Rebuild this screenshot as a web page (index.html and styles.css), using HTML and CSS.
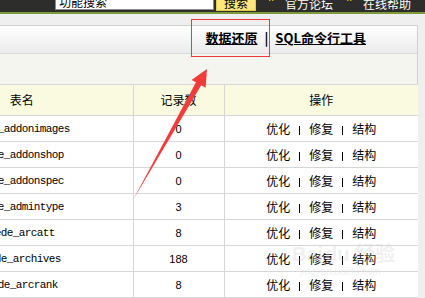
FILE: index.html
```html
<!DOCTYPE html>
<html lang="zh-CN">
<head>
<meta charset="utf-8">
<title>数据库管理</title>
<link rel="stylesheet" href="styles.css">
</head>
<body>
<div class="topbar">
  <div class="search">功能搜索</div>
  <div class="btn">搜索</div>
  <a class="toplink first"><svg class="ticon" width="6" height="6" viewBox="0 0 6 6"><rect x="0" y="1" width="1.5" height="4" fill="#d9a21f"/><rect x="3" y="0" width="1.5" height="5" fill="#d9a21f"/></svg><span>官方论坛</span></a>
  <a class="toplink second"><svg class="ticon" width="6" height="6" viewBox="0 0 6 6"><rect x="0" y="1" width="1.5" height="4" fill="#d9a21f"/><rect x="3" y="0" width="1.5" height="5" fill="#d9a21f"/></svg><span>在线帮助</span></a>
</div>
<div class="panel">
  <div class="toolbar">
    <a class="tlink">数据还原</a><span class="tsep">|</span><a class="tlink">SQL命令行工具</a>
  </div>
  <div class="subbar"></div>
  <table class="dbtable">
    <colgroup><col class="c1"><col class="c2"><col class="c3"></colgroup>
    <thead>
      <tr><th>表名</th><th>记录数</th><th>操作</th></tr>
    </thead>
    <tbody>
      <tr><td class="name">dede_addonimages</td><td class="num">0</td><td class="ops"><a>优化</a><span class="osep"></span><a>修复</a><span class="osep"></span><a>结构</a></td></tr>
      <tr><td class="name">dede_addonshop</td><td class="num">0</td><td class="ops"><a>优化</a><span class="osep"></span><a>修复</a><span class="osep"></span><a>结构</a></td></tr>
      <tr><td class="name">dede_addonspec</td><td class="num">0</td><td class="ops"><a>优化</a><span class="osep"></span><a>修复</a><span class="osep"></span><a>结构</a></td></tr>
      <tr><td class="name">dede_admintype</td><td class="num">3</td><td class="ops"><a>优化</a><span class="osep"></span><a>修复</a><span class="osep"></span><a>结构</a></td></tr>
      <tr><td class="name">dede_arcatt</td><td class="num">8</td><td class="ops"><a>优化</a><span class="osep"></span><a>修复</a><span class="osep"></span><a>结构</a></td></tr>
      <tr><td class="name">dede_archives</td><td class="num">188</td><td class="ops"><a>优化</a><span class="osep"></span><a>修复</a><span class="osep"></span><a>结构</a></td></tr>
      <tr><td class="name">dede_arcrank</td><td class="num">8</td><td class="ops"><a>优化</a><span class="osep"></span><a>修复</a><span class="osep"></span><a>结构</a></td></tr>
    </tbody>
  </table>
</div>
<div class="mark-box"></div>
<svg class="arrow" width="425" height="298" viewBox="0 0 425 298">
  <polygon points="133,200 196,82.3 191.6,79.9 207,69 205.6,87.7 201.2,85.3" fill="#f23b3b"/>
</svg>
<div class="watermark">
  <div class="wm1">Bai<span class="paw">du</span> 经验</div>
  <div class="wm2">jingyan.baidu.com</div>
</div>
</body>
</html>
```

FILE: styles.css
```css
html, body {
  margin: 0;
  padding: 0;
}
body {
  width: 425px;
  height: 298px;
  overflow: hidden;
  position: relative;
  background: #efefef;
  font-family: "Noto Sans CJK SC", "Liberation Sans", sans-serif;
  font-size: 12px;
  color: #000;
}
.topbar {
  height: 12px;
  background: #2d2d2b;
  border-bottom: 2px solid #7d9b3c;
  display: flex;
  align-items: flex-end;
  overflow: hidden;
}
.search {
  margin-left: 55px;
  width: 159px;
  height: 22px;
  margin-bottom: 2px;
  box-sizing: border-box;
  background: #fff;
  border: 1px solid #8a8a8a;
  padding: 0 3px 0;
  display: flex;
  align-items: flex-end;
  line-height: 14px;
  color: #000;
  flex: none;
}
.btn {
  margin-left: 2px;
  width: 40px;
  height: 22px;
  margin-bottom: 1px;
  box-sizing: border-box;
  background: #fbe77c;
  border: 1px solid #e6c94a;
  display: flex;
  align-items: flex-end;
  justify-content: center;
  line-height: 14px;
  flex: none;
}
.toplink {
  display: flex;
  align-items: flex-end;
  color: #fff;
  line-height: 14px;
  margin-bottom: 1px;
  flex: none;
}
.toplink.first { margin-left: 13px; }
.toplink.second { margin-left: 14px; }
.ticon {
  align-self: flex-start;
  margin-top: -1px;
  margin-right: 10px;
}
.panel {
  margin-top: 11px;
  margin-left: -90px;
  width: 508px;
  box-sizing: border-box;
  border: 1px solid #cfcfcf;
  border-bottom: none;
  background: #fff;
}
.toolbar {
  height: 28px;
  box-sizing: border-box;
  padding-bottom: 3px;
  background: linear-gradient(#ffffff, #ebebeb);
  border-bottom: 1px solid #dadada;
  display: flex;
  align-items: center;
  justify-content: flex-end;
  padding-right: 51px;
  font-size: 13px;
  font-weight: bold;
  line-height: 16px;
}
.tlink {
  color: #000;
  text-decoration: underline;
}
.tsep {
  margin: 0 7px;
}
.subbar {
  height: 30px;
  background: #f4f5ee;
}
.dbtable {
  border-collapse: collapse;
  table-layout: fixed;
  width: 507px;
}
.dbtable col.c1 { width: 222px; }
.dbtable col.c2 { width: 91px; }
.dbtable col.c3 { width: 194px; }
.dbtable th, .dbtable td {
  border: 1px solid #d6d6d6;
  padding: 0;
  text-align: center;
  vertical-align: middle;
  white-space: nowrap;
  overflow: hidden;
  line-height: 14px;
}
.dbtable th {
  height: 30px;
  font-weight: normal;
  background: #fafae1;
}
.dbtable td {
  height: 25px;
  background: #fff;
}
.dbtable tr > :first-child { border-left: none; }
.dbtable tr > :last-child { border-right: none; }
.name {
  font-family: "Liberation Mono", monospace;
  font-size: 11px;
  letter-spacing: -0.6px;
}
.num {
  font-family: "Liberation Sans", sans-serif;
  font-size: 11px;
}
.ops a {
  color: #000;
  text-decoration: none;
}
.osep {
  display: inline-block;
  width: 1px;
  height: 9px;
  margin: 0 9px;
  background: #000;
  vertical-align: -1px;
}
.mark-box {
  position: absolute;
  left: 191px;
  top: 19px;
  width: 79px;
  height: 38px;
  box-sizing: border-box;
  border: 1px solid #ec3a3a;
}
.arrow {
  position: absolute;
  left: 0;
  top: 0;
}
.watermark {
  position: absolute;
  left: 292px;
  top: 242px;
  color: rgba(205, 205, 205, 0.3);
  font-family: "Liberation Sans", "Noto Sans CJK SC", sans-serif;
  pointer-events: none;
}
.wm1 {
  font-size: 20px;
  font-weight: bold;
  line-height: 24px;
}
.paw {
  margin-left: 2px;
}
.wm2 {
  font-size: 10px;
  line-height: 12px;
  margin-left: 8px;
}
```
